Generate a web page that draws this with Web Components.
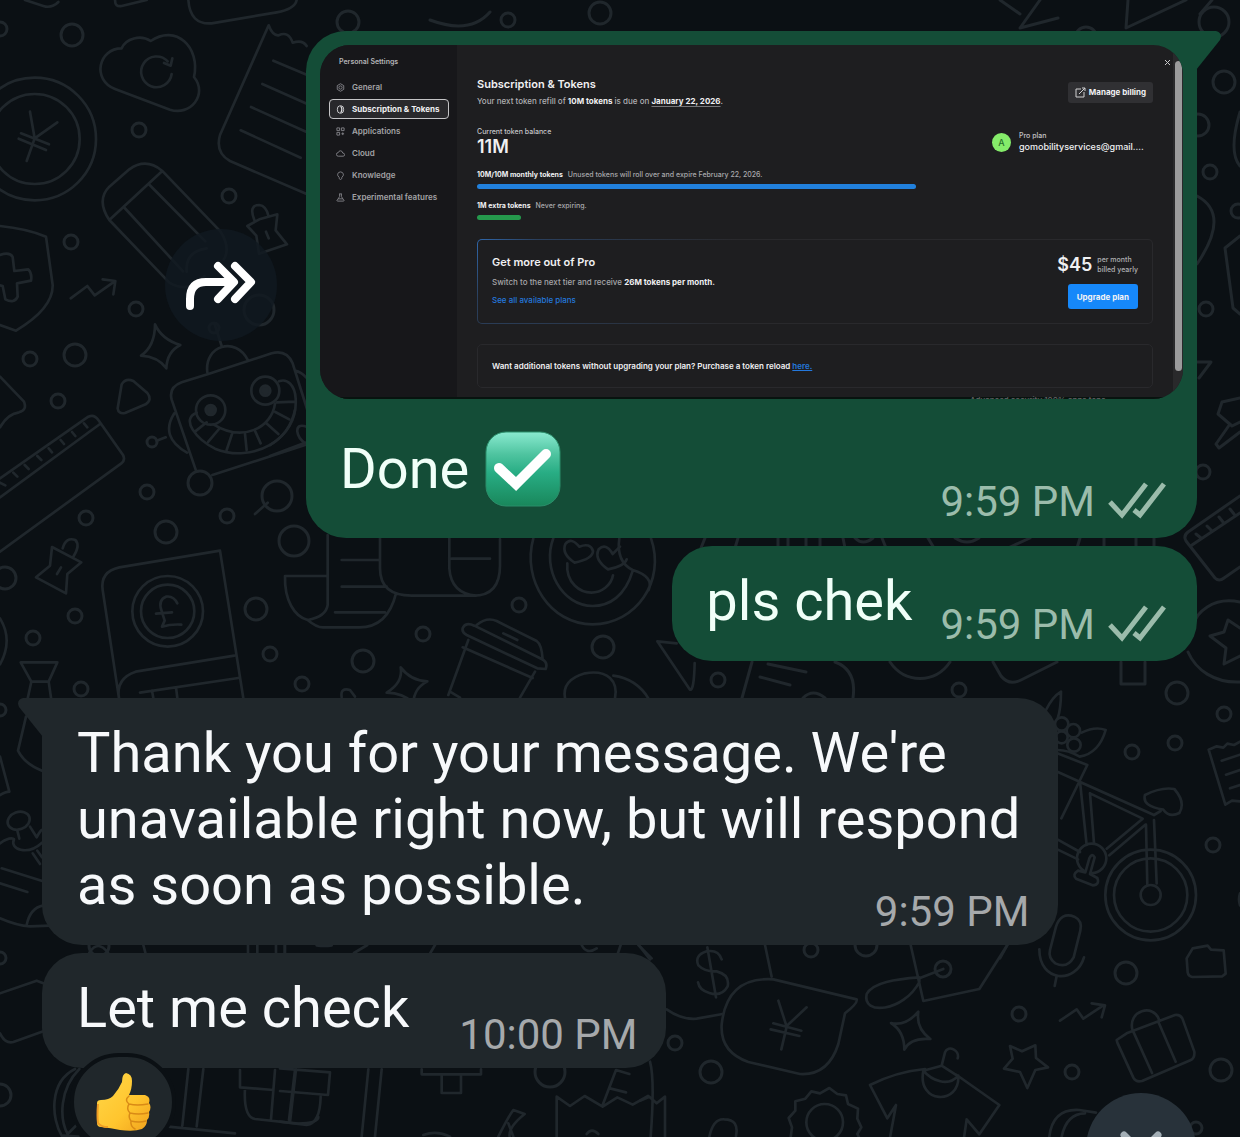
<!DOCTYPE html>
<html lang="en">
<head>
<meta charset="utf-8">
<meta name="viewport" content="width=device-width, initial-scale=1">
<title>Chat</title>
<style>
  body {
    margin: 0;
    background: #0b1014;
    font-family: Roboto, "Liberation Sans", sans-serif;
  }
</style>
</head>
<body>
<chat-thread>
  <chat-row side="out">
    <forward-button></forward-button>
    <chat-bubble side="out" tail media time="9:59 PM">
      <settings-shot slot="media"></settings-shot>
      Done <check-emoji></check-emoji>
    </chat-bubble>
  </chat-row>
  <chat-row side="out">
    <chat-bubble side="out" time="9:59 PM">pls chek</chat-bubble>
  </chat-row>
  <chat-row side="in" first>
    <chat-bubble side="in" tail long time="9:59 PM">Thank you for your message. We're unavailable right now, but will respond as soon as possible.</chat-bubble>
  </chat-row>
  <chat-row side="in">
    <chat-bubble side="in" time="10:00 PM">Let me check<reaction-button slot="reaction"></reaction-button></chat-bubble>
  </chat-row>
</chat-thread>
<scroll-down></scroll-down>

<script>
function define(name, html, setup) {
  const template = document.createElement("template");
  template.innerHTML = html;
  customElements.define(name, class extends HTMLElement {
    constructor() {
      super();
      this.attachShadow({ mode: "open" });
      this.shadowRoot.appendChild(template.content.cloneNode(true));
    }
    connectedCallback() {
      if (setup) setup(this, this.shadowRoot);
    }
  });
}

// doodle background. dots are [x, y, radius]
const dots = [
  [0, 29, 7], [72, 35, 11], [139, 130, 7], [229, 196, 7], [71, 242, 7], [136, 309, 7], [259, 310, 15],
  [214, 328, 5], [75, 355, 11], [30, 359, 7], [58, 401, 7], [152, 442, 5], [147, 492, 7], [86, 518, 7],
  [227, 516, 7], [166, 532, 11], [200, 483, 12], [277, 496, 15], [294, 541, 15], [5, 578, 11],
  [75, 616, 7], [33, 638, 7], [256, 609, 11], [270, 654, 7], [302, 684, 7], [81, 689, 7], [0, 710, 6],
  [423, 634, 7], [363, 661, 11], [519, 605, 7], [603, 647, 11], [718, 680, 7], [959, 690, 7],
  [1177, 693, 11], [1224, 714, 7], [1132, 752, 7], [1175, 743, 7], [1213, 845, 7], [1126, 973, 11],
  [1019, 1014, 7], [1072, 1072, 7], [1221, 1070, 11], [1196, 1128, 6], [0, 958, 6], [0, 1095, 11],
  [811, 950, 7], [866, 945, 11], [675, 1043, 7], [711, 1072, 11], [943, 969, 8], [550, 1072, 15],
  [1224, 82, 11], [1198, 125, 11], [1210, 172, 7], [1238, 211, 7], [1206, 309, 7], [1203, 472, 7],
  [348, 22, 11], [508, 20, 7], [600, 13, 11], [1214, 22, 15], [1086, 38, 11], [99, 946, 10]
];

define("chat-wallpaper", `
<style>
  :host { display: block; position: absolute; inset: 0; overflow: hidden; }
  svg { display: block; width: 100%; min-width: 1240px; fill: none; stroke: #20272c; stroke-linecap: round; stroke-linejoin: round; }
</style>
<svg viewBox="0 0 1240 1137" stroke-width="3" aria-hidden="true">
  <g id="dots"></g>
  <!-- top left: cloud, coin, receipt, pencil, pin, shield -->
  <g transform="scale(.33333)" stroke-width="8">
    <path d="M75 0l55 18q25 8 45-12M345 0q0 22 20 18l75-18M565 0q5 75 70 70l195-33q55-10 60-37"/>
    <path d="M365 145c-70 0-90 95-20 122l165 62c60 20 115-45 72-98 20-90-55-160-130-108-30-20-75-8-87 22z"/>
    <path d="M515 222a46 46 0 1 1-12-38M517 175l-5 22-20-8"/>
    <circle cx="104" cy="417" r="184"/><circle cx="104" cy="417" r="135"/>
    <path d="M90 335l14 80-24 68M172 367l-68 48M63 400l84 33M56 416l82 34"/>
    <path d="M920 582L690 483q-45-25-30-78L806 76q12 32 30 30 30-14 42 22 30-10 42 10M820 182l100 42M787 252l130 58M753 321l165 74M722 391l180 82"/>
    <path d="M328 660q-40-60 0-100l60-52q50-36 98 4l175 182q32 50 10 85M328 660l180 188q60 35 105-20M328 660l158-146M374 624l175 190M446 552l170 172M560 815q-5-60 60-70"/>
    <path d="M742 678l36-20 54-15-5 48 34 42-84 28-8-54zM763 660q-18-45 15-45 20 2 27 32M798 695l8 20"/>
    <path d="M0 678q80 8 138 32l20 145q2 70-110 137L0 975"/>
    <path d="M0 765q30-10 38 6l5 42 42-5q12 12 8 34l-42 8 2 40q-10 22-37 8l-8-40-8-2"/>
    <path d="M212 895l50-37 22 28 60-42M308 838l38 5-6 40"/>
  </g>
  <!-- left middle: star, robot, ruler, pin, pound book, tie -->
  <g transform="translate(0 340) scale(.33333)" stroke-width="8">
    <path d="M465-47q20 45 76 62-40 20-42 70-25-35-76-38 42-28 42-94z"/>
    <path d="M353 205l12-72q12-20 35-10l42 36q16 20-5 34l-62 26q-20 4-22-14z"/>
    <path d="M625 102l-80 25q-40 15-30 52l72 210M625 102l190-62q45-12 63 30l44 140M637 405l285-92M622 97c-10-80 85-110 122-36M665 18l-22-68M523 220q-45 70 38 118M470 302l27-10M885 92q20 5 33 20M920 260q-30-10-28 15 2 20 24 35"/>
    <circle cx="632" cy="210" r="44"/><circle cx="796" cy="152" r="42"/>
    <circle cx="632" cy="210" r="15" fill="#20272c"/><circle cx="796" cy="152" r="15" fill="#20272c"/>
    <path d="M590 218c-50 20 0 80 55 108 110 45 250-25 242-150-2-40-25-62-50-52M640 253c90 55 175 10 185-62M585 275l35-28M625 305l32-38M680 330l16-48M740 330l-5-48M782 310l-16-35M835 282l-36-32M868 238l-42-22M885 185l-54 2"/>
    <path d="M0 415L265 230q18-8 30 10l74 105q8 15-5 25L0 635M0 472l300-220M0 428l16 8M40 398l12 12M74 375l12 12M112 348l12 12M146 325l10 12M182 300l10 12M216 276l10 12M252 250l10 12"/>
    <path d="M108 712l42-35 6-56 88 46-42 35-4 58zM188 625q10-35 38-25 16 16-6 50M183 682l-12 20"/>
    <path d="M0 110l72 75q10 25-15 32-35 5-57 45M0 835q40 65 0 138M765 522l38-34"/>
    <path d="M357 1075L308 750q-8-55 50-68l302-50 70 443M357 1075q-10-60 50-80l296-48M420 1058l295-44M456 1052l4 22M528 1042l4 32"/>
    <circle cx="503" cy="814" r="106"/><circle cx="503" cy="814" r="80"/>
    <path d="M532 790q-12-24-34-20-24 10-14 40l10 32-8 18q26-8 58-6M468 821l48-4"/>
    <path d="M82 1080l12-55-32-58h110l-26 58 8 55M94 1025h52"/>
  </g>
  <!-- scroll, smile coin, cup -->
  <g transform="translate(270 410) scale(.33333)" stroke-width="8">
    <path d="M0 105q60-35 75-105M0 138l105-40"/>
    <path d="M173 375v210q-5 35-60 45c-40-10-70-60-68-132h128M113 630q30 25 50 22h105q85 0 110-102M330 385v90q0 82 95 82h185q80 0 80-90v-80M538 385v90q5 75 80 82M215 450h110M215 530h135M195 607h150M545 446h115"/>
    <path d="M790 385c-35 125 50 258 178 258 130 0 220-130 175-258M850 385c-35 90 25 203 118 203 50 0 98-30 120-105M892 460c-5 60 40 88 72 88 30 0 60-22 65-52M1048 385q-10 70 40 95 65 20 48 60"/>
    <path d="M928 410q-25-30-42-8-12 30 28 56 55-12 55-35-8-26-41-13zM1028 432q-20-35-42-14-15 30 28 60 50-10 56-30M1028 432l22-22"/>
    <path d="M578 655q8-20 35-8l202 100q20 10 12 30l-25-2-212-100q-15-8-12-20zM620 645q30-25 60-12l120 60q15 10 18 55M700 670l42 20M595 690l-60 165M578 712l210 92M795 785l-45 78M540 845l30 18"/>
    <path d="M350 848q50-30 42-76 30 40 80 42-40 20-42 65-30-30-80-31zM215 862q-5-30 25-22l15 20"/>
    <path d="M885 865q-10-55 60-75c70-12 100 25 90 75M1030 797q70 10 105 68M1220 700l-58-6 98 145q12 5 14-80"/>
  </g>
  <!-- strip between bubbles and under the second one -->
  <path d="M705 538l-4 10M738 538l-3 10M778 538v10M788 538v10M806 538v10M820 538v10M843 538l2 10M855 538q8 8 18 0M882 538l4 10M928 538l6 10M955 538q12 8 24 0M1030 538l-22 10M1080 538l-3 10M1104 538v10M1136 538v10M1154 538v10"/>
  <path d="M752 662l-10 36M768 664l38 8M760 677l30 8M835 662q22 8 18 36M890 662c15 22 45 22 60 0M993 662l8 14q8 10 20 4l36-18M803 698q10-10 22 0"/>
  <!-- right edge -->
  <path d="M1212 0l-12 14M1000 0l20 14M1040 0l-20 28 38-10M1128 0l-2 28 60-28M430 20q40 15 60-8"/>
  <path d="M1240 112q-12 40 0 54M1197 196q34 18 0 68M1240 236l-15 12 8 60 7 6M1197 362h14l-12 16M1240 398l-18 4-4 12 14 12 8-4M1230 424l-14 20 3 4 21-16"/>
  <path d="M1240 496l-52 36q-5 4-2 9l29 37q4 4 9 0l16-11M1192 545l48-32M1196 534l5 4M1207 526l5 5M1219 517l4 5M1230 509l4 5"/>
  <path d="M1240 602c-28-6-44 12-46 22M1188 652c8 18 26 31 52 30M1240 656l-16 8 2-16-16-12 14-4 4-12 12 8M1121 662v22h24v-22"/>
  <!-- bicycle, mic, suitcase, receipt -->
  <g transform="translate(1000 660) scale(.33333)" stroke-width="8">
    <path d="M138 150q20-40 45-55 0 50-10 80M172 280l90 35-78 160M172 335l290 130M240 365l20 190M270 400l12 150M245 368l190 85M270 400l158 76-108 90M436 494l-108 92M172 538l68 38M172 568l62 30M438 494l4 182M462 480l8 190M462 465l20-12"/>
    <path d="M435 405q50-25 88-18 35 40 15 72-30 15-48-10-65-10-55-44zM245 218q40-20 72-8-20 70-78 80-35-20-65-20"/>
    <circle cx="185" cy="192" r="20"/><circle cx="220" cy="212" r="20"/><circle cx="185" cy="232" r="18"/><circle cx="222" cy="255" r="20"/>
    <circle cx="452" cy="705" r="136"/><circle cx="452" cy="705" r="110"/><circle cx="452" cy="705" r="30"/>
    <circle cx="275" cy="595" r="44"/>
    <path d="M268 595l-12 42-22-5q-18 12-6 24l50 20q22-2 14-22l-22-12 14-50q-8-15-16 3z" fill="#0b1014"/>
    <path d="M168 800q15-45 55-30 25 12 18 42l-20 80q-20 35-55 18-22-16-16-40zM118 868c0 100 110 105 134 24M170 948l-6 30"/>
    <path d="M560 895l18-30 45-8 10 12 38 2 6 70-10 8-90 2q-12-2-14-14zM180 1082l50-34 20 28 60-40M275 1030l40 6-10 36"/>
    <path d="M350 1140l30-20 145-55q15-2 22 10l36 100q2 20-12 26l-145 62q-18 5-26-10l-48-105zM398 1112c-18-60 65-85 80-30M400 1115l56 124M475 1085l52 120"/>
    <path d="M30 1158l36 16 40-18 2 38 36 28-38 8-24 54-22-48-48-10 26-30zM148 1430q10-85 90-80l50 8M185 1430q15-70 70-70"/>
    <path d="M720 245l-18 10-20-4-12 12-20-4-24 10 50 165 20-12 24 2M665 302l55-18M678 344l42-14M690 385l30-10M720 700q-6 18 0 36M22 855l-22 40"/>
  </g>
  <!-- yen tag, needle, shirt, badge, paper bag -->
  <g transform="translate(640 930) scale(.33333)" stroke-width="8">
    <path d="M0 50l30 38M80 238q45 32 90 28l78-14M375 45l20 95M245 88q-10-30-45-24-38 12-25 42 20 20 55 18 40 10 33 45-18 32-55 20-30-8-34-32M202 52l26 150"/>
    <path d="M400 148l250 60q5 10-35 42l-20 92q-30 95-115 90l-155-36q-85-30-80-112 15-145 155-136zM415 212l25 78-16 68M500 232l-60 56M400 280l84 22M392 298l86 20"/>
    <path d="M812 45l38 168 168-36 84-132M838 142c-70 5-140 15-158 50-15 65 110 55 158-36zM838 145l72-28"/>
    <path d="M835 245q-8 50 36 82-60-5-78 32 0-55-40-80 45 10 82-34z"/>
    <path d="M690 465q80-40 165-48M950 435l128 90-60 88-38-45-8 55M690 465l52 100 26-40-18 98M850 422c-20 100 110 105 105 15-30 35-80 15-105-15l55-15 50 32M905 407l10-40c10-25 45-5 38 18"/>
    <circle cx="554" cy="577" r="55"/>
    <path d="M452 622l4-30-10-28 20-22 0-28 30-8 18-22 26 6 28-16 24 18 26 4 6 26 30 14-2 30 12 26-12 20 6 12"/>
    <path d="M208 620q12-55 45-52 45 0 35 50M30 395q15 55 2 225M0 512l28-12 22 20 25-20v120"/>
  </g>
  <g transform="translate(280 930) scale(.33333)" stroke-width="8">
    <path d="M15 45v24M110 46q25 4 45 0M262 45l-40 24M465 45l-14 24M905 45q15 30 45 10M1022 45l-8 24M1075 45l40 40"/>
    <path d="M0 415l150 12-6 68-144-12M48 418l-18 158M0 575l80 10q40-5 42-85M265 418l-20 202M305 418l-20 202M425 418v15h60v56h58v-56h60v-15M485 433h58"/>
    <path d="M830 620V500l40 28 44-30 54 32 44-28 46 22 46-26M968 525l40-105 40 12M990 475l48 12M655 620q30-60 45-80l34 12q-50 40-45 68M685 580l15 40M430 615q40-15 80 5M920 612q15-20 35 0"/>
  </g>
  <g transform="translate(0 640) scale(.33333)" stroke-width="8">
    <path d="M78 230L54 332q20 40 72 60M0 350l28 105q-10 0-28 10M0 610q25-18 40-14M0 835q50 22 90 24l60-2M80 855q10-50 48-58M5 685l122 38M0 730l82 26M0 1060l110-38 20 8M0 1180q15 32 40 26l90-32M268 938q25-40 56 0M430 915l6 23M744 915v23M772 915v23M828 915v23M854 915v23"/>
    <ellipse cx="56" cy="542" rx="34" ry="26" transform="rotate(-20 56 542)"/>
    <path d="M52 572l6 24M90 560l20 32M42 598c-14 30 40 50 84 10M110 592q14-26 18-22M98 640l22 32M112 632l14 20"/>
    <path d="M225 1287c-80 40-70 150-40 200M238 1287c-60 60-60 150-35 195l30-30M190 1487l45 3M565 1287l-18 170M610 1287l-20 172M505 1460l200 20M720 1290v52l100 8M825 1290l-12 148M885 1290l-18 150M735 1345q-5 85 30 92l130 14q60-2 60-20"/>
  </g>
</svg>
`, (host, root) => {
  root.getElementById("dots").innerHTML = dots
    .map(([x, y, r]) => `<circle cx="${x}" cy="${y}" r="${r}"/>`)
    .join("");
});

define("chat-thread", `
<style>
  :host {
    display: block;
    position: relative;
    height: 100vh;
    overflow: hidden;
    background: #0b1014;
  }
  main {
    position: relative;
    display: flex;
    flex-direction: column;
    gap: 8px;
    padding: 31px 43px 0 42px;
  }
</style>
<chat-wallpaper></chat-wallpaper>
<main><slot></slot></main>
`);

define("chat-row", `
<style>
  :host { display: flex; align-items: center; gap: 29px; }
  :host([side="out"]) { justify-content: flex-end; }
  :host([first]) { margin-top: 29px; }
</style>
<slot></slot>
`);

define("chat-bubble", `
<style>
  :host {
    --bubble: #20272b;
    --meta: #a6a9ab;
    display: block;
    position: relative;
    box-sizing: border-box;
    max-width: 88%;
    border-radius: 40px;
    background: var(--bubble);
    color: #f7f9fb;
  }
  :host([side="out"]) { --bubble: #144d37; --meta: #9bbcab; color: #f0fff8; }
  :host([side="in"][tail]) { border-top-left-radius: 0; }
  :host([side="out"][tail]) { border-top-right-radius: 0; }
  :host([media]) { flex: 0 1 891px; min-width: 0; }

  .tail { display: none; position: absolute; top: 0; width: 25px; height: 40px; fill: var(--bubble); }
  :host([tail]) .tail { display: block; }
  :host([side="out"]) .tail { left: calc(100% - 1px); }
  :host([side="in"]) .tail { right: calc(100% - 1px); transform: scaleX(-1); }

  .media { display: none; padding: 14px 14px 0; }
  :host([media]) .media { display: block; }

  .body { display: flex; justify-content: space-between; gap: 50px; padding: 0 29px 0 35px; }
  :host([side="out"]) .body { gap: 28px; padding: 0 30px 0 34px; }
  :host([long]) .body { display: grid; }
  :host([long]) .body > * { grid-area: 1 / 1; }

  .text { margin: 0; padding: 22px 0 27px; font-size: 56px; line-height: 66px; }
  :host([media]) .text { display: flex; align-items: center; gap: 16px; padding: 32px 0 31px; }

  .meta {
    display: flex;
    align-items: center;
    gap: 12px;
    align-self: end;
    justify-self: end;
    padding-bottom: 8px;
    font-size: 42px;
    line-height: 50px;
    color: var(--meta);
    white-space: nowrap;
  }
  :host([side="out"]) .meta { padding-bottom: 11px; }
  .ticks { display: none; width: 60px; height: 42px; fill: none; stroke: currentColor; stroke-width: 5; }
  :host([side="out"]) .ticks { display: block; }
</style>
<svg class="tail" viewBox="0 0 25 40" aria-hidden="true"><path d="M0 0H20Q27 2 24 9L0 39Z"/></svg>
<div class="media"><slot name="media"></slot></div>
<div class="body">
  <p class="text"><slot></slot></p>
  <div class="meta">
    <time></time>
    <svg class="ticks" viewBox="0 0 60 42" role="img" aria-label="Delivered"><path d="M3 21L15 34L39 3M27 29L33 34L57 3"/></svg>
  </div>
</div>
<slot name="reaction"></slot>
`, (host, root) => {
  root.querySelector("time").textContent = host.getAttribute("time");
});

define("forward-button", `
<style>
  :host { display: block; flex: none; }
  button {
    display: block;
    width: 112px;
    height: 112px;
    padding: 0;
    border: 0;
    border-radius: 50%;
    background: rgba(16, 25, 32, 0.8);
  }
  svg { display: block; width: 112px; height: 112px; fill: none; stroke: #fff; stroke-width: 8; stroke-linecap: round; stroke-linejoin: round; }
</style>
<button aria-label="Forward">
  <svg viewBox="0 0 112 112"><path d="M25 77V70Q25 53 41 53H68M53 37L69 53L53 70M70 37L86 53L70 70"/></svg>
</button>
`);

define("check-emoji", `
<style>
  :host { display: block; width: 76px; height: 76px; }
  svg { display: block; width: 100%; height: 100%; }
</style>
<svg viewBox="0 0 76 76" role="img" aria-label="Check mark">
  <linearGradient id="g" x1="0" y1="0" x2="0" y2="1">
    <stop offset="0" stop-color="#8aead0"/><stop offset=".3" stop-color="#4fc4a0"/>
    <stop offset=".55" stop-color="#28ad84"/><stop offset="1" stop-color="#19875b"/>
  </linearGradient>
  <rect x="1" y="1" width="74" height="74" rx="20" fill="url(#g)" stroke="#2b8e6a"/>
  <path d="M14 37L31 53L61 23" fill="none" stroke="#fff" stroke-width="10" stroke-linecap="round"/>
</svg>
`);

define("reaction-button", `
<style>
  :host { display: block; position: absolute; left: 28px; top: 100px; }
  button {
    display: grid;
    place-items: center;
    box-sizing: border-box;
    width: 106px;
    height: 98px;
    padding: 0;
    border: 4px solid #0b1014;
    border-radius: 53px;
    background: #20272b;
  }
  svg { display: block; width: 56px; height: 60px; }
</style>
<button aria-label="Thumbs up reaction">
  <svg viewBox="0 0 56 60">
    <linearGradient id="t" x1="0" y1="0" x2="1" y2="1">
      <stop offset="0" stop-color="#ffd84a"/><stop offset=".6" stop-color="#ffc52e"/><stop offset="1" stop-color="#f0a11c"/>
    </linearGradient>
    <path fill="url(#t)" d="M2 31q0-3 4-3 8 0 12-4 6-7 9-14 0-8 4-9 6 1 6 8 0 8-3 14h16q6 2 4 8 3 4 0 9 1 5-2 8 0 6-5 9-8 3-22 1-9-2-19-3-4 0-4-4z"/>
    <path fill="none" stroke="#d98a16" stroke-width="1.5" stroke-linecap="round" d="M34 24q-5 4 0 8-3 5 1 9-2 4 1 8-1 5 4 8M34 32q8 2 19 0M35 41q8 2 18 0M36 49q8 2 15 0"/>
    <path fill="none" stroke="#ee9d24" stroke-width="2" d="M3 32q-1 12 0 19 3 4 10 4"/>
  </svg>
</button>
`);

define("scroll-down", `
<style>
  :host { display: block; position: fixed; right: 44px; bottom: -66px; }
  button { display: block; width: 110px; height: 110px; padding: 0; border: 0; border-radius: 50%; background: #28323a; }
  svg { display: block; width: 110px; height: 110px; fill: none; stroke: #a4afb6; stroke-width: 7; stroke-linecap: round; stroke-linejoin: round; }
</style>
<button aria-label="Scroll to bottom"><svg viewBox="0 0 110 110"><path d="M38 42L55 59L72 42"/></svg></button>
`);

// the shared picture: a settings window
define("nav-item", `
<style>
  :host { display: block; }
  a {
    display: flex;
    align-items: center;
    gap: 7px;
    box-sizing: border-box;
    height: 20px;
    padding: 0 6px;
    border: 1px solid transparent;
    border-radius: 4px;
    color: #a3a3a6;
    font-size: 8px;
    font-weight: 600;
    text-decoration: none;
    white-space: nowrap;
  }
  :host([current]) a { border-color: #c4c4c6; background: #29292c; color: #f0f0f2; font-weight: 700; }
  svg { flex: none; width: 9px; height: 9px; fill: none; stroke: #85858a; stroke-width: 1; }
  :host([current]) svg { stroke: #d8d8da; }
</style>
<a href="#"><svg viewBox="0 0 10 10" aria-hidden="true"></svg><slot></slot></a>
`, (host, root) => {
  const icons = {
    gear: `<path d="M5 .8L8.6 2.9V7.1L5 9.2L1.4 7.1V2.9Z"/><circle cx="5" cy="5" r="1.8"/>`,
    coin: `<path d="M4 1Q1.500 1 1.500 5T4 9H6Q8.500 9 8.500 5T6 1Z"/><path d="M5 1.500Q6.500 2 6.500 5T5 8.500" stroke-width="1.500"/>`,
    apps: `<path d="M1 1h3v3H1zM6 1h3v3H6zM1 6h3v3H1zM6 7.500h3M7.500 6v3"/>`,
    cloud: `<path d="M2.500 8Q.5 8 .5 6T2.500 4Q3 2 5 2T7.500 4.500Q9.500 4.500 9.500 6.300T8 8Z"/>`,
    bulb: `<path d="M3.500 7Q1.500 5.500 1.800 3.500Q2.500 1 5 1T8.200 3.500Q8.500 5.500 6.500 7V8Q6 9.500 5 9.500T3.500 8Z"/>`,
    flask: `<path d="M3.500 1H6.500M4 1V4L1 8.500Q1 9 2 9H8Q9 9 9 8.500L6 4V1M2.500 6.500H7.500"/>`
  };
  root.querySelector("svg").innerHTML = icons[host.getAttribute("icon")];
});

define("usage-meter", `
<style>
  :host { display: block; }
  p { display: flex; gap: 5px; margin: 0 0 4px; font-size: 7px; line-height: 10px; color: #a9a9ac; white-space: nowrap; }
  b { color: #f0f0f2; font-weight: 700; }
  .bar { width: 65%; height: 5px; }
  .fill { height: 5px; border-radius: 3px; background: var(--fill); }
</style>
<p><b><slot name="name"></slot></b><slot></slot></p>
<div class="bar"><div class="fill"></div></div>
`, (host, root) => {
  root.querySelector(".fill").style.width = host.getAttribute("value") + "%";
});

define("settings-shot", `
<style>
  :host {
    display: flex;
    position: relative;
    overflow: hidden;
    border-radius: 30px;
    background: #1e1e20;
    color: #f0f0f2;
    font: 500 8px/12px Inter, "Liberation Sans", sans-serif;
  }
  aside { flex: none; box-sizing: border-box; width: 137px; padding: 10px 8px 0 9px; background: #17171a; }
  aside h2 { margin: 0 0 8px 10px; font-size: 7px; line-height: 14px; font-weight: 600; color: #b4b4b7; }
  nav { display: grid; gap: 2px; }
  section { flex: 1; min-width: 0; padding: 32px 20px 11px 20px; white-space: nowrap; }
  h1, h3, p { margin: 0; }
  a { color: #2478dd; text-decoration: none; }
  b { color: #f0f0f2; font-weight: 700; }
  h1, h3 { font-size: 11px; line-height: 14px; font-weight: 600; }
  header, .balance, .offer { display: flex; align-items: center; justify-content: space-between; }
  header { margin-bottom: 20px; }
  header p { margin-top: 4px; color: #b0b0b3; }
  u { text-underline-offset: 2px; text-decoration-color: #77777a; }
  button { font: inherit; font-weight: 700; border: 0; border-radius: 3px; color: #f2f2f4; }
  .manage { display: flex; align-items: center; gap: 3px; height: 21px; padding: 0 7px; background: #303033; }
  .manage svg { width: 11px; height: 11px; fill: none; stroke: #d0d0d2; }
  .balance { margin-bottom: 13px; }
  .balance p { font-size: 7px; line-height: 10px; color: #c4c4c7; }
  .balance div > p:only-child, .usage p { font-weight: 600; }
  .big { display: block; font-size: 18px; line-height: 20px; font-weight: 600; }
  .account { display: flex; align-items: center; gap: 8px; width: 161px; }
  .account i { flex: none; width: 19px; border-radius: 50%; background: #85ec6a; color: #28702a; font-size: 9px; line-height: 19px; font-style: normal; text-align: center; }
  .account span { font-size: 9px; line-height: 12px; }
  usage-meter + usage-meter { margin-top: 12px; }
  .box { box-sizing: border-box; border: 1px solid #29292c; border-radius: 5px; }
  .offer {
    align-items: flex-start;
    min-height: 85px;
    margin: 19px 0 20px;
    padding: 15px 14px 14px;
    border-color: transparent;
    background:
      linear-gradient(#1e1e20, #1e1e20) padding-box,
      radial-gradient(circle at 0 0, #2f67ab, #2a3f5c 60px, #29292c 260px) border-box;
  }
  .offer p { margin: 7px 0 6px; color: #a6a6a9; }
  .price { display: flex; align-items: center; gap: 5px; margin-bottom: 9px; }
  .price small { font-size: 7px; line-height: 10px; color: #b0b0b3; }
  .upgrade { display: block; height: 25px; margin-left: auto; padding: 0 9px; background: #1688fa; }
  .reload { display: flex; align-items: center; min-height: 44px; padding: 0 14px; }
  .reload span { font-weight: 600; }
  .reload a { text-decoration: underline; }
  .track { flex: none; box-sizing: border-box; width: 10px; padding: 16px 1px 28px 2px; background: #29292b; }
  .thumb { height: 100%; border-radius: 4px; background: #9b9b9c; }
  .close { position: absolute; top: 12px; right: 10px; width: 11px; height: 11px; padding: 0; background: none; }
  .close svg { display: block; width: 11px; height: 11px; stroke: #c9c9cb; }
  .behind { position: absolute; left: 650px; bottom: -6px; font-size: 8px; line-height: 10px; color: #626264; }
  .edge { position: absolute; left: 0; right: 0; bottom: 0; height: 2px; background: #08130f; }
</style>
<aside>
  <h2>Personal Settings</h2>
  <nav>
    <nav-item icon="gear">General</nav-item>
    <nav-item icon="coin" current>Subscription &amp; Tokens</nav-item>
    <nav-item icon="apps">Applications</nav-item>
    <nav-item icon="cloud">Cloud</nav-item>
    <nav-item icon="bulb">Knowledge</nav-item>
    <nav-item icon="flask">Experimental features</nav-item>
  </nav>
</aside>
<section>
  <header>
    <div>
      <h1>Subscription &amp; Tokens</h1>
      <p>Your next token refill of <b>10M tokens</b> is due on <b><u>January 22, 2026</u></b>.</p>
    </div>
    <button class="manage">
      <svg viewBox="0 0 11 11" aria-hidden="true"><path d="M6 2H1V10H9V5M4 7L10 1M7 1H10V4"/></svg>Manage billing
    </button>
  </header>
  <div class="balance">
    <div><p>Current token balance</p><span class="big">11M</span></div>
    <div class="account"><i>A</i><div><p>Pro plan</p><span>gomobilityservices@gmail....</span></div></div>
  </div>
  <usage-meter value="100" style="--fill: #2180dc"><span slot="name">10M/10M monthly tokens</span>Unused tokens will roll over and expire February 22, 2026.</usage-meter>
  <usage-meter value="10" style="--fill: #25994c"><span slot="name">1M extra tokens</span>Never expiring.</usage-meter>
  <div class="box offer">
    <div>
      <h3>Get more out of Pro</h3>
      <p>Switch to the next tier and receive <b>26M tokens per month.</b></p>
      <a href="#">See all available plans</a>
    </div>
    <div>
      <div class="price"><span class="big">$45</span><small>per month<br>billed yearly</small></div>
      <button class="upgrade">Upgrade plan</button>
    </div>
  </div>
  <div class="box reload"><span>Want additional tokens without upgrading your plan? Purchase a token reload <a href="#">here.</a></span></div>
</section>
<div class="track"><div class="thumb"></div></div>
<button class="close" aria-label="Close"><svg viewBox="0 0 11 11"><path d="M3 3L8 8M8 3L3 8"/></svg></button>
<div class="edge"></div>
<div class="behind">Advanced security 100% apps tops</div>
`);
</script>
</body>
</html>
